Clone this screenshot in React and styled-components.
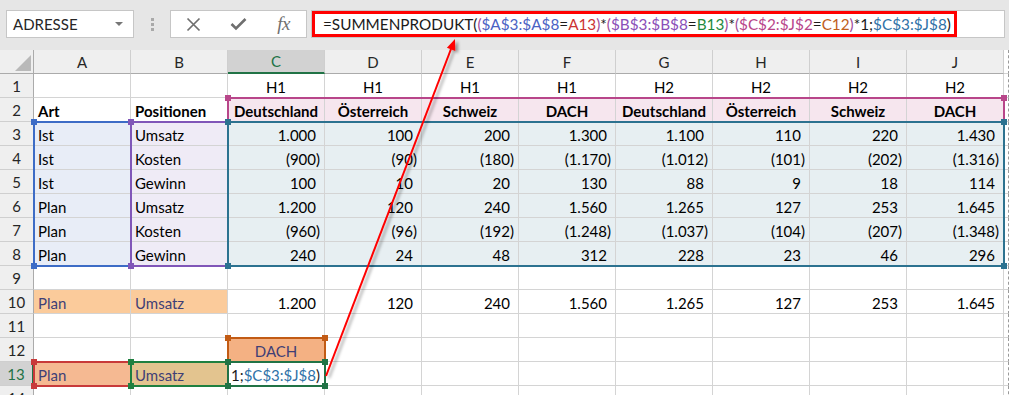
import React from "react";
import styled, { createGlobalStyle } from "styled-components";

const GlobalStyle = createGlobalStyle`
  html, body { margin: 0; padding: 0; background: #fff; }
  body { font-family: Lato, "Open Sans", sans-serif; }
`;

const Page = styled.div`
  position: relative;
  width: 1009px;
  height: 395px;
  overflow: hidden;
  background: #fff;
`;

/* ---------- formula bar ---------- */
const TopBar = styled.div`
  height: 50px;
  box-sizing: border-box;
  background: #e6e6e6;
  display: flex;
  align-items: flex-start;
  padding: 10px 0 0 6px;
`;

const NameBox = styled.div`
  width: 128px;
  height: 28px;
  box-sizing: border-box;
  background: #fff;
  border: 1px solid #c6c6c6;
  display: flex;
  align-items: center;
  justify-content: space-between;
  padding: 0 10px 0 6px;
  font-size: 15px;
  color: #262626;
`;

const Caret = styled.span`
  width: 0;
  height: 0;
  border-left: 4px solid transparent;
  border-right: 4px solid transparent;
  border-top: 4px solid #767676;
`;

const Grip = styled.div`
  width: 36px;
  height: 28px;
  display: flex;
  flex-direction: column;
  align-items: center;
  justify-content: center;
  gap: 2px;
`;

const GripDot = styled.span`
  width: 3px;
  height: 3px;
  background: #a9a9a9;
`;

const FnBox = styled.div`
  width: 137px;
  height: 28px;
  box-sizing: border-box;
  background: #fff;
  border: 1px solid #c6c6c6;
  display: grid;
  grid-template-columns: repeat(3, 1fr);
  align-items: center;
  justify-items: center;
`;

const FxText = styled.span`
  font-family: "Liberation Serif", "DejaVu Serif", serif;
  font-style: italic;
  font-size: 19px;
  color: #6f6f6f;
  letter-spacing: -0.5px;
`;

const FormulaInput = styled.div`
  margin-left: 4px;
  width: 694px;
  height: 28px;
  box-sizing: border-box;
  background: #fff;
  border: 1px solid #c6c6c6;
  display: flex;
  align-items: stretch;
`;

const RedFrame = styled.div`
  width: 645px;
  box-sizing: border-box;
  border: 3px solid #ff0000;
  display: flex;
  align-items: center;
  padding-left: 8px;
  font-size: 15.3px;
  white-space: nowrap;
  color: #1a1a1a;
`;

const Tok = styled.span`
  color: ${(p) => p.$c || "#1a1a1a"};
`;

/* ---------- sheet ---------- */
const SheetWrap = styled.div`
  position: relative;
`;

const Grid = styled.div`
  display: grid;
  grid-template-columns: 34px repeat(10, 97px) 1fr;
  grid-auto-rows: 24px;
`;

const OverlayGrid = styled(Grid)`
  position: absolute;
  inset: 0;
  grid-template-rows: repeat(15, 24px);
  pointer-events: none;
`;

const Corner = styled.div`
  box-sizing: border-box;
  background: #efefef;
  border-right: 1px solid #ababab;
  border-bottom: 1px solid #ababab;
  display: flex;
  align-items: flex-end;
  justify-content: flex-end;
  padding: 0 2px 2px 0;
`;

const CornerTri = styled.span`
  width: 0;
  height: 0;
  border-left: 16px solid transparent;
  border-bottom: 16px solid #b9b9b9;
`;

const ColHead = styled.div`
  box-sizing: border-box;
  background: ${(p) => (p.$sel ? "#d2d2d2" : "#efefef")};
  color: ${(p) => (p.$sel ? "#217346" : "#262626")};
  border-right: 1px solid #cfcfcf;
  border-bottom: ${(p) => (p.$sel ? "2px solid #217346" : "1px solid #ababab")};
  display: flex;
  align-items: center;
  justify-content: center;
  font-size: 15px;
`;

const RowHead = styled.div`
  box-sizing: border-box;
  background: ${(p) => (p.$sel ? "#d2d2d2" : "#efefef")};
  color: ${(p) => (p.$sel ? "#217346" : "#262626")};
  border-right: ${(p) => (p.$sel ? "2px solid #217346" : "1px solid #ababab")};
  border-bottom: 1px solid #cfcfcf;
  display: flex;
  align-items: center;
  justify-content: center;
  font-size: 15px;
  padding-top: 1px;
`;

const justify = { left: "flex-start", right: "flex-end", center: "center" };

const Cell = styled.div`
  box-sizing: border-box;
  min-width: 0;
  background: ${(p) => p.$bg || "#fff"};
  color: ${(p) => p.$color || "#000"};
  border-right: 1px solid #d4d4d4;
  border-bottom: 1px solid #d4d4d4;
  display: flex;
  align-items: center;
  justify-content: ${(p) => justify[p.$align || "left"]};
  padding: 2px 4px 0 4px;
  font-size: 15px;
  font-weight: ${(p) => (p.$bold ? 700 : 400)};
  white-space: nowrap;
  overflow: hidden;
`;

const EdgeCell = styled.div`
  box-sizing: border-box;
  border-right: 1px dashed #9a9a9a;
  border-bottom: 1px solid #d4d4d4;
  background: #fff;
`;

const Ghost = styled.span`
  visibility: hidden;
`;

const Highlight = styled.div`
  grid-column: ${(p) => p.$c} / span ${(p) => p.$w || 1};
  grid-row: ${(p) => p.$r} / span ${(p) => p.$h || 1};
  margin: -1px;
  position: relative;
  box-sizing: border-box;
  border: 2px solid ${(p) => p.$color};
`;

const Handle = styled.span`
  position: absolute;
  width: 6px;
  height: 6px;
  background: ${(p) => p.$color};
  ${(p) => (p.$top ? "top: -4px;" : "bottom: -4px;")}
  ${(p) => (p.$left ? "left: -4px;" : "right: -4px;")}
`;

const ArrowSvg = styled.svg`
  position: absolute;
  left: 0;
  top: 0;
  pointer-events: none;
`;

/* ---------- data ---------- */
const C = {
  blue: "#3d6cc6",
  red: "#c83a3a",
  purple: "#8056b8",
  green: "#1f8040",
  pink: "#b8468a",
  orange: "#c25b14",
  teal: "#2c7290",
  active: "#217346",
  input: "#3f3f76",
};

const BG = {
  blue: "#e8edf7",
  purple: "#efebf6",
  pink: "#f6e6ee",
  teal: "#e7eff2",
  peach: "#fbcb9b",
  salmon: "#f5b992",
  khaki: "#e3c48f",
  dach: "#f4b183",
};

const letters = ["A", "B", "C", "D", "E", "F", "G", "H", "I", "J"];
const labels = [
  ["Ist", "Umsatz"],
  ["Ist", "Kosten"],
  ["Ist", "Gewinn"],
  ["Plan", "Umsatz"],
  ["Plan", "Kosten"],
  ["Plan", "Gewinn"],
];
const values = [
  ["1.000", "100", "200", "1.300", "1.100", "110", "220", "1.430"],
  ["(900)", "(90)", "(180)", "(1.170)", "(1.012)", "(101)", "(202)", "(1.316)"],
  ["100", "10", "20", "130", "88", "9", "18", "114"],
  ["1.200", "120", "240", "1.560", "1.265", "127", "253", "1.645"],
  ["(960)", "(96)", "(192)", "(1.248)", "(1.037)", "(104)", "(207)", "(1.348)"],
  ["240", "24", "48", "312", "228", "23", "46", "296"],
];
const countries = ["Deutschland", "Österreich", "Schweiz", "DACH"];

const Num = ({ v }) => (
  <>
    {v}
    {v.startsWith("(") ? null : <Ghost>)</Ghost>}
  </>
);

function buildRows() {
  const rows = [];
  const empty = () => letters.map(() => ({ text: "" }));

  rows.push(
    letters.map((l, i) =>
      i < 2 ? { text: "" } : { text: i < 6 ? "H1" : "H2", align: "center" }
    )
  );
  rows.push([
    { text: "Art", bold: true },
    { text: "Positionen", bold: true },
    ...[...countries, ...countries].map((t) => ({
      text: t,
      bold: true,
      align: "center",
      bg: BG.pink,
    })),
  ]);
  labels.forEach((lab, r) => {
    rows.push([
      { text: lab[0], bg: BG.blue },
      { text: lab[1], bg: BG.purple },
      ...values[r].map((v) => ({ num: v, align: "right", bg: BG.teal })),
    ]);
  });
  rows.push(empty());
  rows.push([
    { text: "Plan", bg: BG.peach, color: C.input },
    { text: "Umsatz", bg: BG.peach, color: C.input },
    ...values[3].map((v) => ({ num: v, align: "right" })),
  ]);
  rows.push(empty());
  rows.push(
    letters.map((l, i) =>
      i === 2
        ? { text: "DACH", align: "center", bg: BG.dach, color: C.input }
        : { text: "" }
    )
  );
  rows.push(
    letters.map((l, i) => {
      if (i === 0) return { text: "Plan", bg: BG.salmon, color: C.input };
      if (i === 1) return { text: "Umsatz", bg: BG.khaki, color: C.input };
      if (i === 2) return { edit: true, align: "right" };
      return { text: "" };
    })
  );
  rows.push(empty());
  return rows;
}

const sheetRows = buildRows();

const ranges = [
  { c: 2, w: 1, r: 4, h: 6, color: C.blue },
  { c: 2, w: 1, r: 14, h: 1, color: C.red },
  { c: 3, w: 1, r: 4, h: 6, color: C.purple },
  { c: 3, w: 1, r: 14, h: 1, color: C.green },
  { c: 4, w: 8, r: 3, h: 1, color: C.pink },
  { c: 4, w: 1, r: 13, h: 1, color: C.orange },
  { c: 4, w: 8, r: 4, h: 6, color: C.teal },
  { c: 4, w: 1, r: 14, h: 1, color: C.active },
];

const formula = [
  ["=SUMMENPRODUKT(", null],
  ["(", "#a04c9a"],
  ["$A$3:$A$8", "#4a62c4"],
  ["=", null],
  ["A13", "#cc3333"],
  [")", "#a04c9a"],
  ["*", null],
  ["(", "#a04c9a"],
  ["$B$3:$B$8", "#8a4fb8"],
  ["=", null],
  ["B13", "#1f8a40"],
  [")", "#a04c9a"],
  ["*", null],
  ["(", "#a04c9a"],
  ["$C$2:$J$2", "#b8468a"],
  ["=", null],
  ["C12", "#c0601c"],
  [")", "#a04c9a"],
  ["*1;", null],
  ["$C$3:$J$8", "#2f72a8"],
  [")", null],
];

function XIcon() {
  return (
    <svg width="15" height="15" viewBox="0 0 15 15">
      <path d="M1.5 1.5 L13.5 13.5 M13.5 1.5 L1.5 13.5" stroke="#6f6f6f" strokeWidth="1.7" fill="none" />
    </svg>
  );
}

function CheckIcon() {
  return (
    <svg width="17" height="14" viewBox="0 0 17 14">
      <path d="M1.5 7 L6 11.5 L15.5 2" stroke="#6f6f6f" strokeWidth="2.6" fill="none" />
    </svg>
  );
}

function renderCellContent(cell) {
  if (cell.num) return <Num v={cell.num} />;
  if (cell.edit)
    return (
      <>
        <Tok>1;</Tok>
        <Tok $c="#2f72a8">$C$3:$J$8</Tok>
        <Tok>)</Tok>
      </>
    );
  return cell.text;
}

export default function App() {
  return (
    <Page>
      <GlobalStyle />
      <TopBar>
        <NameBox>
          ADRESSE
          <Caret />
        </NameBox>
        <Grip>
          <GripDot />
          <GripDot />
          <GripDot />
        </Grip>
        <FnBox>
          <XIcon />
          <CheckIcon />
          <FxText>fx</FxText>
        </FnBox>
        <FormulaInput>
          <RedFrame>
            {formula.map(([t, c], i) => (
              <Tok key={i} $c={c}>
                {t}
              </Tok>
            ))}
          </RedFrame>
        </FormulaInput>
      </TopBar>

      <SheetWrap>
        <Grid>
          <Corner>
            <CornerTri />
          </Corner>
          {letters.map((l) => (
            <ColHead key={l} $sel={l === "C"}>
              {l}
            </ColHead>
          ))}
          <EdgeCell />
          {sheetRows.map((row, ri) => (
            <React.Fragment key={ri}>
              <RowHead $sel={ri === 12}>{ri + 1}</RowHead>
              {row.map((cell, ci) => (
                <Cell
                  key={ci}
                  $bg={cell.bg}
                  $color={cell.color}
                  $bold={cell.bold}
                  $align={cell.align}
                >
                  {renderCellContent(cell)}
                </Cell>
              ))}
              <EdgeCell />
            </React.Fragment>
          ))}
        </Grid>
        <OverlayGrid>
          {ranges.map((r, i) => (
            <Highlight key={i} $c={r.c} $w={r.w} $r={r.r} $h={r.h} $color={r.color}>
              <Handle $top $left $color={r.color} />
              <Handle $top $color={r.color} />
              <Handle $left $color={r.color} />
              <Handle $color={r.color} />
            </Highlight>
          ))}
        </OverlayGrid>
      </SheetWrap>

      <ArrowSvg width="1009" height="395" viewBox="0 0 1009 395">
        <defs>
          <filter id="arrowShadow" x="-20%" y="-5%" width="140%" height="110%">
            <feDropShadow dx="3" dy="2" stdDeviation="1.6" floodColor="#000" floodOpacity="0.35" />
          </filter>
        </defs>
        <g filter="url(#arrowShadow)">
          <line x1="326" y1="376" x2="451" y2="49" stroke="#ff0000" strokeWidth="2" />
          <polygon points="455,39 446.9,47.7 455.3,50.9" fill="#ff0000" />
        </g>
      </ArrowSvg>
    </Page>
  );
}
